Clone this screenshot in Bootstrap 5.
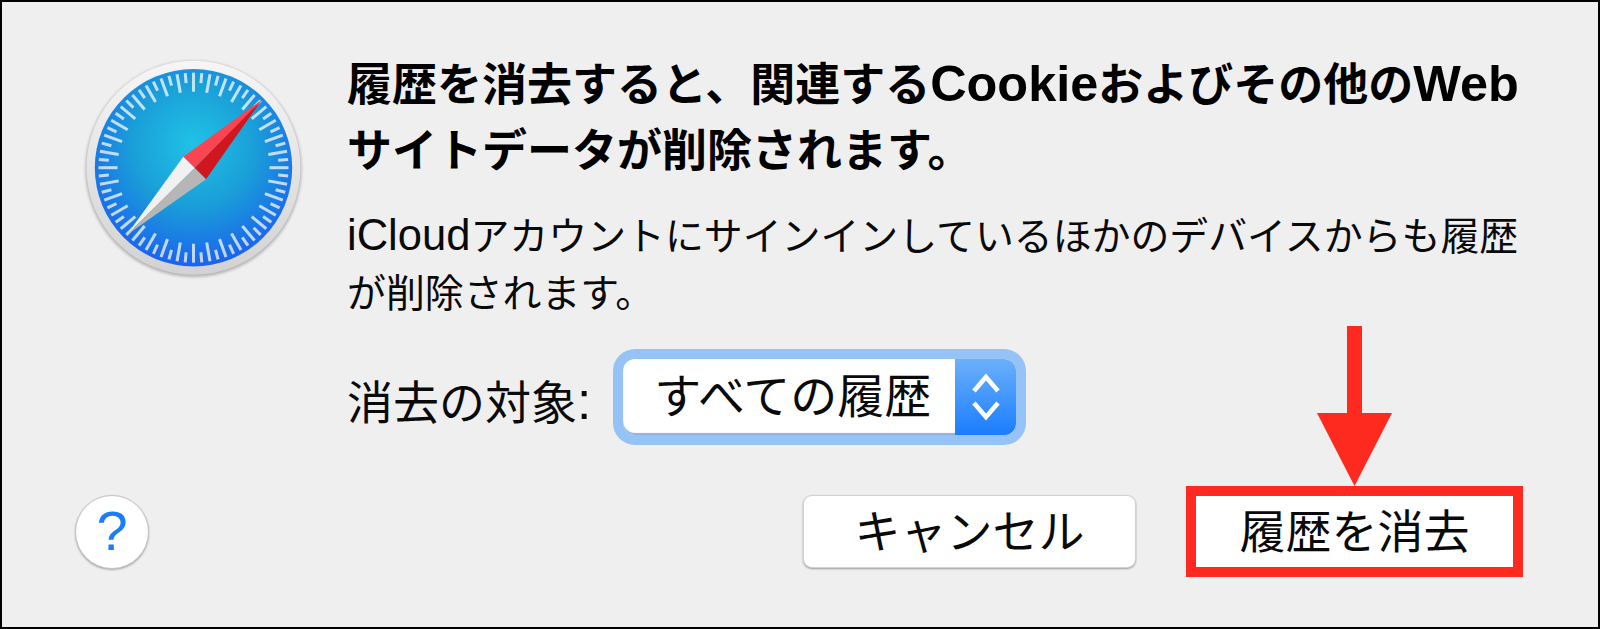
<!DOCTYPE html>
<html lang="ja">
<head>
    <meta charset="UTF-8">
    <title>履歴を消去</title>
    <link href="https://cdn.jsdelivr.net/npm/bootstrap@5.3.0/dist/css/bootstrap.min.css" rel="stylesheet">
    <style>
        html, body {
            margin: 0;
            height: 100%;
            overflow: hidden;
        }

        body {
            font-family: "Liberation Sans", "Noto Sans CJK JP", sans-serif;
            color: #0a0a0a;
            background: #efefef;
        }

        .mac-dialog {
            height: 629px;
            border: 2px solid #000;
            background: #efefef;
            padding: 0 75px 50px 73px;
        }

        .compass {
            flex: none;
            width: 260px;
            height: 260px;
            margin: 38px 27px 0 -15px;
        }

        .dialog-text {
            padding-top: 49px;
            white-space: nowrap;
        }

        .latin-run {
            font-size: 1.12em;
        }

        .dialog-title {
            font-size: 45px;
            font-weight: 700;
            line-height: 66px;
            margin: 0 0 22px;
            color: #000;
        }

        .dialog-body {
            font-size: 38.9px;
            line-height: 57px;
            margin: 0 0 37px;
        }

        .field-label {
            font-size: 46px;
            line-height: 60px;
            margin-right: 32px;
            position: relative;
            top: 5px;
        }

        .mac-select {
            width: 393px;
            height: 76px;
            border-radius: 12px;
            background: #fff;
            box-shadow: 0 0 0 10px #96c3f5, inset 0 -2px 1px #8fb1dc;
            overflow: hidden;
            font-size: 47px;
        }

        .mac-select-value {
            padding-left: 31px;
            line-height: 76px;
        }

        .mac-select-arrows {
            width: 61px;
            background: linear-gradient(#6cb0fb, #1a7dfd);
        }

        .help-btn {
            width: 74px;
            height: 74px;
            padding: 0 0 2px;
            border-radius: 50%;
            border: 1px solid #c4c4c4;
            background: #fff;
            color: #1b7dfb;
            font-size: 56px;
            line-height: 1;
            box-shadow: 0 1px 2px rgba(0, 0, 0, .3);
        }

        .mac-btn {
            height: 73px;
            width: 333px;
            padding: 0;
            font-size: 46px;
            line-height: 1;
            color: #0a0a0a;
            background: #fff;
            border: 1px solid #d2d2d2;
            border-radius: 9px;
            box-shadow: 0 1px 2px rgba(0, 0, 0, .35);
        }

        .callout-box {
            position: relative;
            width: 337px;
            height: 91px;
            margin-left: 50px;
            border: 10px solid #ff2a1f;
            background: #fff;
        }

        .callout-box .btn {
            width: 100%;
            height: 100%;
            padding: 0;
            border: 0;
            border-radius: 0;
            font-size: 46px;
            line-height: 1;
            color: #0a0a0a;
        }

        .callout-arrow {
            position: absolute;
            left: 121px;
            bottom: 100%;
            margin-bottom: 10px;
            width: 75px;
            height: 160px;
        }
    </style>
</head>
<body>

<div class="mac-dialog d-flex flex-column justify-content-between">
    <div class="d-flex">
        <svg class="compass" viewBox="0 0 260 260">
            <defs>
                <linearGradient id="rim" x1="0" y1="0" x2="0" y2="1">
                    <stop offset="0" stop-color="#f6f6f6"/>
                    <stop offset="1" stop-color="#d2d2d2"/>
                </linearGradient>
                <radialGradient id="face" cx="0.5" cy="0.38" r="0.62">
                    <stop offset="0" stop-color="#20c2e6"/>
                    <stop offset="0.5" stop-color="#1a9fd8"/>
                    <stop offset="1" stop-color="#1b63ee"/>
                </radialGradient>
                <filter id="soft" x="-10%" y="-10%" width="120%" height="120%">
                    <feGaussianBlur stdDeviation="1.5"/>
                </filter>
                <filter id="haze" x="-5%" y="-5%" width="110%" height="110%">
                    <feGaussianBlur stdDeviation="0.5"/>
                </filter>
            </defs>
            <circle cx="133.5" cy="129" r="108" fill="#000" opacity=".25" filter="url(#soft)"/>
            <circle cx="133.5" cy="127.7" r="107" fill="url(#rim)"/>
            <circle cx="133.5" cy="127.7" r="98.7" fill="url(#face)"/>
            <g id="ticks" stroke="#fff" stroke-opacity=".72" stroke-width="3" filter="url(#haze)"></g>
            <polygon points="201.7,60 123.3,116.7 134.7,128" fill="#fb4452"/>
            <polygon points="201.7,60 134.7,128 146,139.3" fill="#d0171f"/>
            <polygon points="66.7,195 123.3,116.7 134.7,128" fill="#f1f1f1"/>
            <polygon points="66.7,195 134.7,128 146,139.3" fill="#b6b6b6"/>
        </svg>

        <div class="dialog-text">
            <h1 class="dialog-title">履歴を消去すると、関連する<span class="latin-run">Cookie</span>およびその他の<span class="latin-run">Web</span><br>サイトデータが削除されます。</h1>
            <p class="dialog-body"><span class="latin-run">iCloud</span>アカウントにサインインしているほかのデバイスからも履歴<br>が削除されます。</p>
            <div class="d-flex align-items-center">
                <span class="field-label">消去の対象<span class="latin-run">:</span></span>
                <div class="mac-select d-flex justify-content-between">
                    <span class="mac-select-value">すべての履歴</span>
                    <span class="mac-select-arrows d-flex align-items-center justify-content-center">
                        <svg width="30" height="52" viewBox="0 0 30 52" fill="none" stroke="#fff" stroke-width="4.5">
                            <path d="M3 20 15 6 27 20"/>
                            <path d="M3 32 15 46 27 32"/>
                        </svg>
                    </span>
                </div>
            </div>
        </div>
    </div>

    <div class="d-flex align-items-center">
        <button type="button" class="btn help-btn">?</button>
        <button type="button" class="btn mac-btn ms-auto">キャンセル</button>
        <div class="callout-box">
            <button type="button" class="btn">履歴を消去</button>
            <svg class="callout-arrow" viewBox="0 0 75 160">
                <rect x="30" y="0" width="15" height="88" fill="#ff2a1f"/>
                <polygon points="0,87 75,87 37.5,160" fill="#ff2a1f"/>
            </svg>
        </div>
    </div>
</div>

<script>
    // compass scale: one tick every 5 degrees, every other one long
    const ticks = document.getElementById("ticks");
    for (let a = 0; a < 360; a += 5) {
        const inner = a % 10 === 0 ? 76 : 85;
        const rad = a * Math.PI / 180;
        const line = document.createElementNS("http://www.w3.org/2000/svg", "line");
        line.setAttribute("x1", 133.5 + Math.sin(rad) * inner);
        line.setAttribute("y1", 127.7 - Math.cos(rad) * inner);
        line.setAttribute("x2", 133.5 + Math.sin(rad) * 95);
        line.setAttribute("y2", 127.7 - Math.cos(rad) * 95);
        ticks.appendChild(line);
    }
</script>
<script src="https://cdn.jsdelivr.net/npm/bootstrap@5.3.0/dist/js/bootstrap.bundle.min.js"></script>
</body>
</html>
